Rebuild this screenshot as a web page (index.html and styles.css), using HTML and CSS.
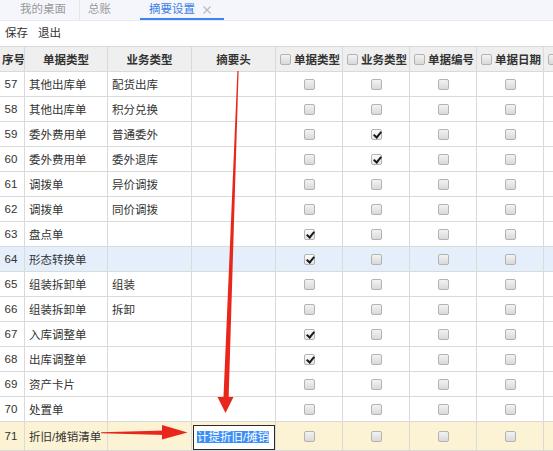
FILE: index.html
```html
<!DOCTYPE html>
<html lang="zh-CN">
<head>
    <meta charset="UTF-8">
    <meta name="viewport" content="width=device-width, initial-scale=1.0">
    <title>摘要设置</title>
    <link rel="stylesheet" href="styles.css">
</head>
<body>
    <div class="tabbar">
        <span class="tab tab-home">我的桌面</span>
        <span class="tab tab-gl">总账</span>
        <span class="tab tab-active">摘要设置
            <svg class="tab-close" width="8" height="8" viewBox="0 0 8 8"><path d="M0.5 0.5L7.5 7.5M7.5 0.5L0.5 7.5" stroke="#b5b9c2" stroke-width="1.1"/></svg>
        </span>
    </div>

    <div class="toolbar">
        <span class="tool">保存</span>
        <span class="tool">退出</span>
    </div>

    <div class="grid-wrap">
        <table class="grid">
            <colgroup>
                <col class="c-no">
                <col class="c-type">
                <col class="c-biz">
                <col class="c-head">
                <col class="c-chk">
                <col class="c-chk">
                <col class="c-chk">
                <col class="c-chk">
                <col class="c-chk">
            </colgroup>
            <thead>
                <tr>
                    <th>序号</th>
                    <th>单据类型</th>
                    <th>业务类型</th>
                    <th>摘要头</th>
                    <th><span class="cb"></span>单据类型</th>
                    <th><span class="cb"></span>业务类型</th>
                    <th><span class="cb"></span>单据编号</th>
                    <th><span class="cb"></span>单据日期</th>
                    <th><span class="cb"></span>往来单位</th>
                </tr>
            </thead>
            <tbody id="gridBody"></tbody>
        </table>
    </div>

    <!-- 标注箭头 -->
    <svg class="marks" width="553" height="451" viewBox="0 0 553 451">
        <polygon points="237.4,71 238.6,71 228.6,399 223.4,399" fill="#e8261c"/>
        <polygon points="217.5,397 233.5,397 225.5,413" fill="#e8261c"/>
        <polygon points="101,432.2 101,433.2 165,435 165,430.5" fill="#e8261c"/>
        <polygon points="162,425 187.5,432.5 162,439.5" fill="#e8261c"/>
    </svg>

    <script>
        // 序号, 单据类型, 业务类型, 勾选列(1=单据类型 2=业务类型)
        const linhas = [
            [57, '其他出库单', '配货出库', 0],
            [58, '其他出库单', '积分兑换', 0],
            [59, '委外费用单', '普通委外', 2],
            [60, '委外费用单', '委外退库', 2],
            [61, '调拨单', '异价调拨', 0],
            [62, '调拨单', '同价调拨', 0],
            [63, '盘点单', '', 1],
            [64, '形态转换单', '', 1],
            [65, '组装拆卸单', '组装', 0],
            [66, '组装拆卸单', '拆卸', 0],
            [67, '入库调整单', '', 1],
            [68, '出库调整单', '', 1],
            [69, '资产卡片', '', 0],
            [70, '处置单', '', 0],
            [71, '折旧/摊销清单', '', 0],
            ['', '', '', 0]
        ];

        const body = document.getElementById('gridBody');
        linhas.forEach(function (l) {
            const tr = document.createElement('tr');
            if (l[0] === 64) tr.className = 'row-hover';
            if (l[0] === 71) tr.className = 'row-edit';

            let html = '<td class="no">' + l[0] + '</td>' +
                       '<td>' + l[1] + '</td>' +
                       '<td>' + l[2] + '</td>';
            if (l[0] === 71) {
                html += '<td class="head-edit"><div class="editor"><span class="sel">计提折旧/摊销</span></div></td>';
            } else {
                html += '<td></td>';
            }
            for (let i = 1; i <= 5; i++) {
                html += '<td class="chk"><span class="cb' + (l[3] === i ? ' on' : '') + '"></span></td>';
            }
            tr.innerHTML = html;
            body.appendChild(tr);
        });
    </script>
</body>
</html>
```

FILE: styles.css
```css
/* 基础 */
html, body {
    margin: 0;
    padding: 0;
    overflow: hidden;
    background-color: #fff;
}
body {
    font-family: "Liberation Sans", "Noto Sans CJK SC", sans-serif;
    font-size: 11.5px;
    color: #333;
    position: relative;
    width: 553px;
    height: 451px;
}

/* 顶部页签 */
.tabbar {
    display: flex;
    height: 20px;
    background-color: #f4f6fb;
    border-bottom: 1px solid #e6e9f0;
    line-height: 18px;
}
.tab {
    color: #9a9a9a;
    box-sizing: border-box;
    height: 20px;
}
.tab-home {
    width: 79px;
    padding-left: 20px;
}
.tab-gl {
    width: 61px;
    padding-left: 8px;
    border-left: 1px solid #e3e5ea;
}
.tab-active {
    width: 84px;
    padding-left: 9px;
    color: #3b7fe6;
    border-bottom: 2px solid #3d84ee;
    display: flex;
    align-items: center;
    gap: 8px;
    height: 20px;
    line-height: 18px;
}
.tab-close {
    display: block;
    margin-top: 1px;
}

/* 工具栏 */
.toolbar {
    height: 25px;
    line-height: 25px;
    padding-left: 5px;
    display: flex;
    gap: 10px;
    color: #333;
}

/* 表格 */
.grid-wrap {
    overflow: hidden;
    width: 553px;
}
.grid {
    border-collapse: collapse;
    table-layout: fixed;
    width: 613px;
    margin-left: -3px;
}
.c-no { width: 27px; }
.c-type { width: 83px; }
.c-biz { width: 84px; }
.c-head { width: 84px; }
.c-chk { width: 67px; }

.grid th,
.grid td {
    border: 1px solid #dadada;
    padding: 0 4px;
    white-space: nowrap;
    overflow: hidden;
    box-sizing: border-box;
}
.grid th {
    height: 25px;
    background-color: #efefef;
    font-weight: bold;
    color: #333;
    text-align: center;
}
.grid th .cb {
    margin-right: 3px;
    margin-top: -2px;
}
.grid td {
    height: 25px;
}
.grid td.no {
    text-align: center;
    padding: 0;
}
.grid td.chk {
    text-align: center;
    padding: 0;
}
.row-hover td {
    background-color: #e5effc;
}
.row-edit td {
    background-color: #fcf3d5;
    height: 29px;
}

/* 正在编辑的摘要头 */
.grid td.head-edit {
    padding: 3px 0 0 1px;
    vertical-align: top;
}
.editor {
    box-sizing: border-box;
    height: 25px;
    border: 1px solid #2b2b2b;
    background-color: #fff;
    padding: 0 3px;
    line-height: 22px;
}
.sel {
    background-color: #3a8ef5;
    color: #fff;
}

/* 复选框 */
.cb {
    display: inline-block;
    position: relative;
    width: 11px;
    height: 11px;
    box-sizing: border-box;
    border: 1px solid #b3b3b3;
    border-radius: 2px;
    background: linear-gradient(#f3f3f3, #d9d9d9);
    vertical-align: middle;
}
.cb.on {
    background: linear-gradient(#fbfbfb, #e6e6e6);
}
.cb.on::after {
    content: '';
    position: absolute;
    left: 3px;
    top: 0;
    width: 3px;
    height: 6px;
    border: solid #1a1a1a;
    border-width: 0 2px 2px 0;
    transform: rotate(40deg);
}

/* 箭头覆盖层 */
.marks {
    position: absolute;
    left: 0;
    top: 0;
    pointer-events: none;
}
```
